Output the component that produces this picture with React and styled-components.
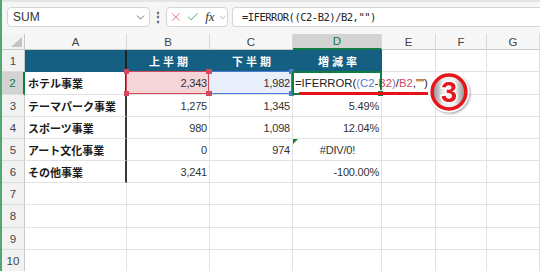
import React from 'react';
import styled, { createGlobalStyle } from 'styled-components';
import { X, Check, ChevronDown } from 'lucide-react';

const GlobalStyle = createGlobalStyle`
  html, body { margin: 0; padding: 0; background: #fff; }
  body {
    width: 540px;
    height: 271px;
    overflow: hidden;
    font-family: "Liberation Sans", "Noto Sans CJK JP", sans-serif;
  }
`;

const Window = styled.div`
  width: 540px;
  height: 271px;
  overflow: hidden;
  box-sizing: border-box;
  border-left: 2px solid #4fa874;
`;

const TopBar = styled.div`
  height: 34px;
  box-sizing: border-box;
  padding: 5px 0 0 5px;
  display: flex;
  align-items: flex-start;
  background: #f6f6f6;
  border-top: 2px solid #e4e4e4;
`;

const NameBox = styled.div`
  width: 143px;
  height: 20px;
  box-sizing: border-box;
  display: flex;
  align-items: center;
  justify-content: space-between;
  padding: 0 2px 0 5px;
  background: #fff;
  border: 1px solid #d6d6d6;
  border-radius: 4px;
  font-size: 12px;
  color: #333;
`;

const Dots = styled.div`
  width: 16px;
  height: 20px;
  display: flex;
  align-items: center;
  justify-content: center;
  font-size: 12px;
  font-weight: bold;
  color: #555;
`;

const IconBox = styled.div`
  width: 62px;
  height: 20px;
  box-sizing: border-box;
  display: flex;
  align-items: center;
  padding-left: 2px;
  gap: 3px;
  background: #fff;
  border: 1px solid #d6d6d6;
  border-radius: 4px;
`;

const Fx = styled.span`
  font-family: "Liberation Serif", serif;
  font-style: italic;
  font-size: 13px;
  color: #333;
  margin-left: 3px;
`;

const FormulaBox = styled.div`
  flex: 1;
  height: 20px;
  margin-left: 4px;
  box-sizing: border-box;
  display: flex;
  align-items: center;
  padding-left: 9px;
  background: #fff;
  border: 1px solid #d6d6d6;
  border-right: none;
  border-radius: 4px 0 0 4px;
  font-family: "DejaVu Sans Mono", "Liberation Mono", monospace;
  font-size: 10.5px;
  letter-spacing: -0.5px;
  color: #222;
`;

const Grid = styled.div`
  display: grid;
  grid-template-columns: 23px 102px 83px 83px 89px 54px 51px 1fr;
  grid-template-rows: 16px 22px 23px 22px 22px 22px 22px 22px 23px 22px 22px;
`;

const Corner = styled.div`
  position: relative;
  background: #f3f3f3;
  border-right: 1px solid #c9c9c9;
  border-bottom: 1px solid #c9c9c9;
  &::after {
    content: '';
    position: absolute;
    right: 2px;
    bottom: 2px;
    width: 11px;
    height: 10px;
    background: #c4c4c4;
    clip-path: polygon(100% 0, 100% 100%, 0 100%);
  }
`;

const ColHead = styled.div`
  box-sizing: border-box;
  display: flex;
  align-items: center;
  justify-content: center;
  font-size: 11.5px;
  background: ${p => (p.$active ? '#d3d3d3' : '#f7f7f7')};
  color: ${p => (p.$active ? '#107c41' : '#444')};
  border-right: 1px solid #d9d9d9;
  border-bottom: ${p => (p.$active ? '2px solid #107c41' : '1px solid #c9c9c9')};
`;

const RowHead = styled.div`
  box-sizing: border-box;
  display: flex;
  align-items: center;
  justify-content: center;
  font-size: 11.5px;
  background: ${p => (p.$active ? '#d3d3d3' : '#f2f2f2')};
  color: ${p => (p.$active ? '#107c41' : '#444')};
  border-right: ${p => (p.$active ? '2px solid #107c41' : '1px solid #c9c9c9')};
  border-bottom: 1px solid #dddddd;
`;

const Cell = styled.div`
  position: relative;
  box-sizing: border-box;
  display: flex;
  align-items: center;
  justify-content: ${p => (p.$align === 'right' ? 'flex-end' : p.$align === 'center' ? 'center' : 'flex-start')};
  padding: 0 2px 0 3px;
  white-space: nowrap;
  font-size: 11px;
  letter-spacing: -0.2px;
  color: #333;
  background: ${p => p.$fill || 'transparent'};
  border-right: ${p => (p.$divider ? '2px solid #3a3a3a' : '1px solid #e2e2e2')};
  border-bottom: 1px solid #e2e2e2;
  z-index: ${p => p.$z || 0};
`;

const TitleCell = styled(Cell)`
  justify-content: center;
  background: #156082;
  border-bottom-color: #156082;
  border-right-color: ${p => (p.$divider ? '#222' : '#156082')};
  color: #fff;
  font-family: "Noto Sans CJK JP", sans-serif;
  font-weight: bold;
  font-size: 11px;
  letter-spacing: 3px;
  padding-left: 6px;
`;

const LabelCell = styled(Cell)`
  font-family: "Noto Sans CJK JP", sans-serif;
  font-weight: bold;
  font-size: 11px;
  letter-spacing: 0;
  color: #1a1a1a;
`;

const RefFrame = styled.div`
  position: absolute;
  inset: -1px 0 0 -1px;
  border: 1px solid ${p => p.$color};
  pointer-events: none;
`;

const Handle = styled.span`
  position: absolute;
  width: 5px;
  height: 5px;
  background: ${p => p.$color};
  ${p => (p.$top ? 'top: -3px;' : 'bottom: -3px;')}
  ${p => (p.$left ? 'left: -3px;' : 'right: -3px;')}
`;

const ActiveFrame = styled.div`
  position: absolute;
  inset: -1px -1px -1px -1px;
  border: 2px solid #107c41;
  pointer-events: none;
  &::after {
    content: '';
    position: absolute;
    right: -4px;
    bottom: -4px;
    width: 5px;
    height: 5px;
    background: #107c41;
    border: 1px solid #fff;
  }
`;

const FormulaText = styled.span`
  position: relative;
  font-size: 11.3px;
  letter-spacing: 0;
  color: #222;
  margin-left: -1px;
`;

const Ref = styled.span`
  color: ${p => p.$color};
`;

const Underline = styled.div`
  position: absolute;
  left: 6px;
  top: 20px;
  width: 129px;
  height: 3px;
  background: #e5121a;
`;

const Badge = styled.svg`
  position: absolute;
  left: 134px;
  top: -2px;
  width: 44px;
  height: 44px;
  overflow: visible;
`;

const ErrorFlag = styled.span`
  position: absolute;
  left: 0;
  top: 0;
  width: 5px;
  height: 5px;
  background: #1e7b3a;
  clip-path: polygon(0 0, 100% 0, 0 100%);
`;

const BLUE = '#4a7bd6';
const RED = '#d24a5c';

const data = [
  { label: 'ホテル事業', b: '2,343', c: '1,982' },
  { label: 'テーマパーク事業', b: '1,275', c: '1,345', d: '5.49%' },
  { label: 'スポーツ事業', b: '980', c: '1,098', d: '12.04%' },
  { label: 'アート文化事業', b: '0', c: '974', d: '#DIV/0!', err: true },
  { label: 'その他事業', b: '3,241', c: '', d: '-100.00%' },
];

const cols = ['A', 'B', 'C', 'D', 'E', 'F', 'G'];

function Handles({ color }) {
  return (
    <>
      <Handle $color={color} $top $left />
      <Handle $color={color} $top />
      <Handle $color={color} $left />
      <Handle $color={color} />
    </>
  );
}

function CircledThree() {
  return (
    <Badge viewBox="0 0 38 38">
      <defs>
        <filter id="shade" x="-20%" y="-20%" width="140%" height="140%">
          <feDropShadow dx="1" dy="1.2" stdDeviation="0.9" floodColor="#000" floodOpacity="0.35" />
        </filter>
        <linearGradient id="gloss" x1="0" x2="1" y1="0" y2="0">
          <stop offset="0" stopColor="#858585" />
          <stop offset="0.33" stopColor="#f0f0f0" />
          <stop offset="0.67" stopColor="#f0f0f0" />
          <stop offset="1" stopColor="#858585" />
        </linearGradient>
      </defs>
      <g filter="url(#shade)">
        <circle cx="19" cy="19" r="17.5" fill="#fff" />
        <circle cx="19" cy="19" r="14.6" fill="url(#gloss)" stroke="#e5121a" strokeWidth="3" />
        <text
          x="19"
          y="27.8"
          textAnchor="middle"
          fontFamily="Liberation Sans, sans-serif"
          fontWeight="bold"
          fontSize="25"
          fill="#e5121a"
          stroke="#fff"
          strokeWidth="2.6"
          paintOrder="stroke"
        >
          3
        </text>
      </g>
    </Badge>
  );
}

function BlankRow({ n }) {
  return (
    <>
      <RowHead>{n}</RowHead>
      {cols.map(c => (
        <Cell key={c} />
      ))}
    </>
  );
}

export default function App() {
  return (
    <Window>
      <GlobalStyle />
      <TopBar>
        <NameBox>
          SUM
          <ChevronDown size={13} color="#555" strokeWidth={1.5} />
        </NameBox>
        <Dots>⋮</Dots>
        <IconBox>
          <X size={16} color="#e0474c" strokeWidth={1.3} />
          <Check size={16} color="#3aa35a" strokeWidth={1.5} />
          <Fx>fx</Fx>
          <ChevronDown size={11} color="#777" strokeWidth={1.5} />
        </IconBox>
        <FormulaBox>=IFERROR((C2-B2)/B2,"")</FormulaBox>
      </TopBar>

      <Grid>
        <Corner />
        {cols.map(c => (
          <ColHead key={c} $active={c === 'D'}>
            {c}
          </ColHead>
        ))}

        <RowHead>1</RowHead>
        <TitleCell $divider />
        <TitleCell>上半期</TitleCell>
        <TitleCell>下半期</TitleCell>
        <TitleCell>増減率</TitleCell>
        <Cell />
        <Cell />
        <Cell />

        {data.map((row, i) => {
          const n = i + 2;
          const first = i === 0;
          return (
            <React.Fragment key={n}>
              <RowHead $active={first}>{n}</RowHead>
              <LabelCell $divider>{row.label}</LabelCell>
              <Cell $align="right" $fill={first ? '#f6d5d8' : undefined} $z={first ? 3 : 0}>
                {row.b}
                {first && (
                  <RefFrame $color={RED}>
                    <Handles color={RED} />
                  </RefFrame>
                )}
              </Cell>
              <Cell $align="right" $fill={first ? '#e8eefa' : undefined} $z={first ? 2 : 0}>
                {row.c}
                {first && (
                  <RefFrame $color={BLUE}>
                    <Handles color={BLUE} />
                  </RefFrame>
                )}
              </Cell>
              {first ? (
                <Cell $z={4}>
                  <FormulaText>
                    =IFERROR(<Ref $color="#8a79c8">(</Ref>
                    <Ref $color={BLUE}>C2</Ref>-<Ref $color={RED}>B2</Ref>
                    <Ref $color="#8a79c8">)</Ref>/<Ref $color={RED}>B2</Ref>,"")
                  </FormulaText>
                  <ActiveFrame />
                  <Underline />
                  <CircledThree />
                </Cell>
              ) : (
                <Cell $align={row.err ? 'center' : 'right'}>
                  {row.err && <ErrorFlag />}
                  {row.d}
                </Cell>
              )}
              <Cell />
              <Cell />
              <Cell />
            </React.Fragment>
          );
        })}

        {[7, 8, 9, 10].map(n => (
          <BlankRow key={n} n={n} />
        ))}
      </Grid>
    </Window>
  );
}
